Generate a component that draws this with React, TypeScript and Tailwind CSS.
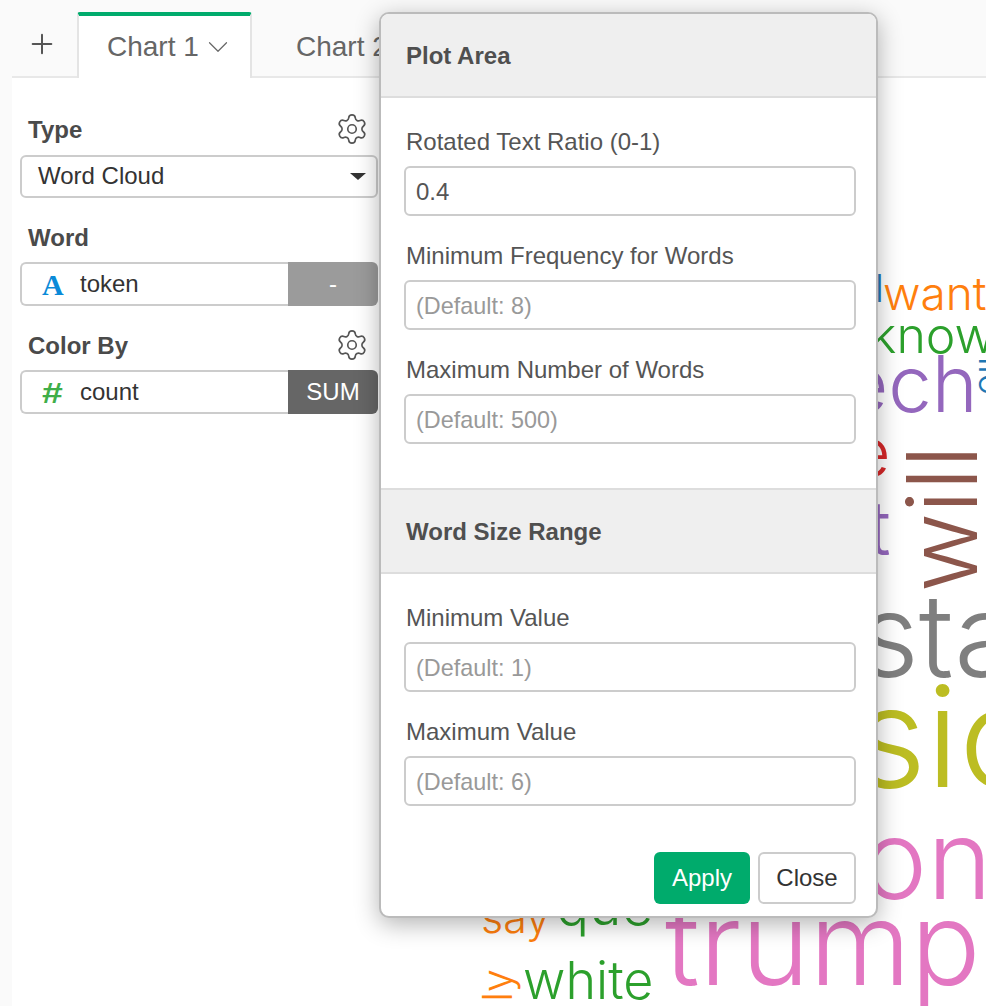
import React from "react";
import { ChevronDown, Plus, Settings } from "lucide-react";

const sans = "font-['Liberation_Sans',Arial,sans-serif]";

// word cloud pieces peeking out behind the popover
const words = [
  { text: "l", x: 875, y: 269, size: 38, color: "#1f77b4" },
  { text: "want", x: 883, y: 270, size: 46, color: "#ff7f0e" },
  { text: "know", x: 870, y: 310, size: 50, color: "#2ca02c" },
  { text: "ech", x: 843, y: 345, size: 78, color: "#9467bd" },
  { text: "e", x: 851, y: 417, size: 68, color: "#d62728" },
  { text: "t", x: 868, y: 489, size: 76, color: "#9467bd" },
  { text: "sta", x: 859, y: 577, size: 116, color: "#7f7f7f" },
  { text: "sio", x: 854, y: 666, size: 140, color: "#bcbd22" },
  { text: "on", x: 862, y: 804, size: 110, color: "#e377c2" },
  { text: "trump", x: 665, y: 885, size: 116, color: "#e377c2" },
  { text: "say", x: 481, y: 896, size: 43, color: "#ff7f0e" },
  { text: "que", x: 556, y: 878, size: 55, color: "#2ca02c" },
  { text: "white", x: 523, y: 955, size: 52, color: "#2ca02c" },
];

function Word({ text, x, y, size, color }: { text: string; x: number; y: number; size: number; color: string }) {
  return (
    <span className="absolute leading-none whitespace-nowrap" style={{ left: x, top: y, fontSize: size, color }}>
      {text}
    </span>
  );
}

function Gear() {
  return <Settings className="w-[34px] h-[34px] mb-[2px] mr-[1px] shrink-0 text-[#555]" strokeWidth={1.15} />;
}

function Field({ label, value, placeholder }: { label: string; value?: string; placeholder?: string }) {
  return (
    <div className="flex flex-col">
      <label className="text-[24px] leading-[28px] text-[#555]">{label}</label>
      <input
        readOnly
        value={value}
        placeholder={placeholder}
        className="mt-[10px] w-[452px] h-[50px] -ml-[2px] rounded-[6px] border-2 border-[#ccc] bg-white px-[10px] pt-[2px] text-[24px] text-[#555] placeholder:text-[#999] placeholder:text-[23.4px] outline-none"
      />
    </div>
  );
}

function PillRow({ icon, name, action, actionClass }: { icon: React.ReactNode; name: string; action: string; actionClass: string }) {
  return (
    <div className="flex w-[358px] h-[44px] -ml-[8px]">
      <div className="flex-1 flex items-center rounded-l-[6px] border-2 border-r-0 border-[#ccc] bg-white pl-[20px]">
        <span className="w-[38px] flex justify-start">{icon}</span>
        <span className="text-[24px] text-[#333]">{name}</span>
      </div>
      <div className={`w-[90px] flex items-center justify-center rounded-r-[6px] text-[24px] text-white ${actionClass}`}>
        {action}
      </div>
    </div>
  );
}

export default function App() {
  return (
    <div className={`relative w-[986px] h-[1006px] overflow-hidden bg-[#fafafa] ${sans}`}>
      {/* tab bar */}
      <div className="h-[78px] ml-[12px] pt-[12px] flex items-stretch border-b-2 border-[#e8e8e8] box-border">
        <div className="w-[65px] flex items-center justify-center pr-[5px]">
          <Plus className="w-[32px] h-[32px] text-[#555]" strokeWidth={1.5} />
        </div>
        <div className="w-[175px] h-[66px] bg-white border-x-2 border-[#e4e4e4] border-t-4 border-t-[#00ab6c] rounded-t-[3px] flex items-center pl-[28px] gap-[2px] text-[28px] text-[#666] z-10">
          Chart 1
          <ChevronDown className="w-[34px] h-[34px] text-[#666]" strokeWidth={0.85} />
        </div>
        <div className="ml-[44px] h-[66px] pt-[4px] flex items-center text-[28px] text-[#666]">Chart 2</div>
      </div>

      <div className="relative ml-[12px] h-[928px] bg-white">
        {/* left settings column */}
        <div className="w-[366px] pl-[16px] pt-[36px]">
          <div className="flex items-center justify-between h-[32px] pr-[8px]">
            <span className="text-[24px] font-bold text-[#4a4a4a]">Type</span>
            <Gear />
          </div>
          <div className="mt-[9px] -ml-[8px] w-[358px] h-[43px] pb-[2px] flex items-center justify-between rounded-[6px] border-2 border-[#ccc] bg-white pl-[16px] pr-[10px] text-[24px] text-[#333]">
            Word Cloud
            <span className="w-0 h-0 mt-[2px] border-x-[8px] border-x-transparent border-t-[7px] border-t-[#333]" />
          </div>

          <div className="mt-[24px] h-[32px] flex items-center text-[24px] font-bold text-[#4a4a4a]">Word</div>
          <div className="mt-[8px]">
            <PillRow
              icon={<span className="text-[30px] font-bold text-[#0a8ad8] font-['Liberation_Serif',serif]">A</span>}
              name="token"
              action="-"
              actionClass="bg-[#9b9b9b]"
            />
          </div>

          <div className="mt-[24px] flex items-center justify-between h-[32px] pr-[8px]">
            <span className="text-[24px] font-bold text-[#4a4a4a]">Color By</span>
            <Gear />
          </div>
          <div className="mt-[8px]">
            <PillRow
              icon={<span className="inline-block text-[30px] font-bold text-[#3fae49] scale-x-125 translate-x-[2px]">#</span>}
              name="count"
              action="SUM"
              actionClass="bg-[#666]"
            />
          </div>
        </div>
      </div>

      {/* word cloud */}
      <div className="font-['Inter',sans-serif] font-[350]">
        {words.map((w) => (
          <Word key={w.text} {...w} />
        ))}
        <span className="absolute left-[868px] top-[470px] text-[97px] leading-none text-[#8c564b] -rotate-90 whitespace-nowrap">will</span>
        <span className="absolute left-[973px] top-[358px] text-[36px] leading-none text-[#1f77b4] rotate-90 whitespace-nowrap">llo</span>
        <span className="absolute left-[481px] top-[965px] text-[41px] leading-none text-[#ff7f0e] -rotate-90 whitespace-nowrap">ly</span>
      </div>

      {/* popover */}
      <div className="absolute left-[379px] top-[12px] w-[499px] h-[906px] rounded-[10px] border-2 border-[#bbb] bg-white shadow-[0_6px_24px_rgba(0,0,0,0.3)] overflow-hidden flex flex-col">
        <div className="h-[84px] pt-[2px] shrink-0 bg-[#efefef] border-b-2 border-[#ddd] flex items-center pl-[25px] text-[24px] font-bold text-[#4f4f4f]">
          Plot Area
        </div>
        <div className="pl-[25px] pt-[30px] flex flex-col gap-[26px]">
          <Field label="Rotated Text Ratio (0-1)" value="0.4" />
          <Field label="Minimum Frequency for Words" placeholder="(Default: 8)" />
          <Field label="Maximum Number of Words" placeholder="(Default: 500)" />
        </div>
        <div className="mt-[44px] h-[86px] pt-[2px] shrink-0 bg-[#efefef] border-y-2 border-[#ddd] flex items-center pl-[25px] text-[24px] font-bold text-[#4f4f4f]">
          Word Size Range
        </div>
        <div className="pl-[25px] pt-[30px] flex flex-col gap-[26px]">
          <Field label="Minimum Value" placeholder="(Default: 1)" />
          <Field label="Maximum Value" placeholder="(Default: 6)" />
        </div>
        <div className="mt-[46px] pr-[20px] flex justify-end gap-[8px]">
          <button className="w-[96px] h-[52px] rounded-[6px] bg-[#00ab6c] text-[24px] text-white">Apply</button>
          <button className="w-[98px] h-[52px] rounded-[6px] border-2 border-[#ccc] bg-white text-[24px] text-[#333]">Close</button>
        </div>
      </div>
    </div>
  );
}
